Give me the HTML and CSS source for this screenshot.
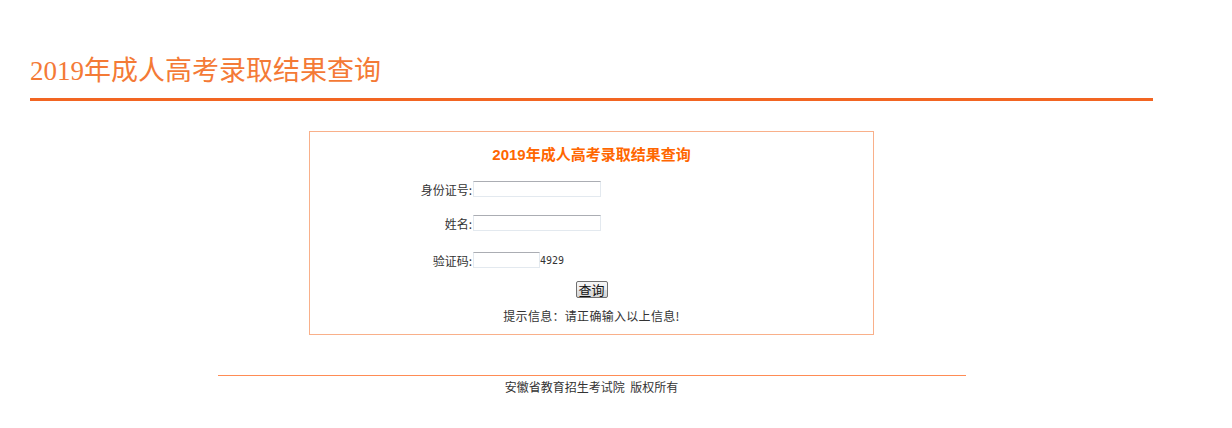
FILE: index.html
```html
<!DOCTYPE html>
<html lang="zh-CN">
<head>
<meta charset="utf-8">
<title>2019年成人高考录取结果查询</title>
<link rel="stylesheet" href="styles.css">
</head>
<body>
<div class="page">
  <h1 class="page-title">2019年成人高考录取结果查询</h1>
  <div class="query-box">
    <div class="box-title">2019年成人高考录取结果查询</div>
    <div class="form-row row1">
      <label class="lbl">身份证号:</label>
      <input class="txt txt-long" type="text">
    </div>
    <div class="form-row row2">
      <label class="lbl">姓名:</label>
      <input class="txt txt-long" type="text">
    </div>
    <div class="form-row row3">
      <label class="lbl">验证码:</label>
      <input class="txt txt-short" type="text"><span class="code">4929</span>
    </div>
    <div class="btn-row"><button class="btn" type="button">查询</button></div>
    <div class="hint">提示信息：请正确输入以上信息!</div>
  </div>
  <div class="footer">安徽省教育招生考试院&nbsp;&nbsp;版权所有</div>
</div>
</body>
</html>
```
FILE: styles.css
```css
html, body {
  margin: 0;
  padding: 0;
  background: #fff;
}
body {
  font-family: "Noto Sans CJK SC", "Liberation Sans", sans-serif;
  color: #333;
  font-size: 12px;
}
.page {
  margin-left: 30px;
  width: 1123px;
  padding-top: 53px;
}
.page-title {
  margin: 0;
  font-family: "Liberation Serif", "Noto Sans CJK SC", serif;
  font-weight: normal;
  font-size: 27px;
  line-height: 36px;
  height: 36px;
  color: #f47a36;
  padding-bottom: 9px;
  border-bottom: 3px solid #f26522;
}
.query-box {
  width: 563px;
  height: 202px;
  margin: 30px auto 0;
  border: 1px solid #f9b08a;
  box-sizing: content-box;
}
.box-title {
  margin-top: 13px;
  height: 20px;
  line-height: 20px;
  text-align: center;
  font-family: "Liberation Sans", "Noto Sans CJK SC", sans-serif;
  font-weight: bold;
  font-size: 15px;
  color: #ff6600;
}
.form-row {
  display: flex;
  align-items: center;
  height: 32px;
}
.row1 { margin-top: 8px; }
.row2 { margin-top: 2px; }
.row3 { margin-top: 5px; }
.lbl {
  width: 162px;
  text-align: right;
  font-size: 12px;
  color: #333;
}
.txt {
  box-sizing: border-box;
  height: 16px;
  margin: 0 0 0 1px;
  padding: 0 2px;
  border: 1px solid #e3e9ef;
  border-top-color: #abadb3;
  background: #fff;
  font-size: 12px;
  outline: none;
}
.txt-long { width: 128px; }
.txt-short { width: 67px; }
.code {
  font-family: "DejaVu Sans Mono", monospace;
  font-size: 10px;
  color: #333;
}
.btn-row {
  display: flex;
  justify-content: center;
  margin-top: 4px;
  height: 19px;
  align-items: center;
}
.btn {
  box-sizing: border-box;
  width: 32px;
  height: 17px;
  padding: 0;
  border: 1px solid #707070;
  border-radius: 2px;
  background: linear-gradient(#f6f6f6, #eeeeee 50%, #e2e2e2 51%, #d6d6d6);
  font-family: "Noto Sans CJK SC", sans-serif;
  font-size: 13px;
  line-height: 15px;
  color: #111;
}
.hint {
  margin-top: 7px;
  height: 20px;
  line-height: 20px;
  text-align: center;
  font-size: 12px;
  letter-spacing: 0.3px;
  color: #333;
}
.footer {
  width: 748px;
  margin: 40px auto 0;
  border-top: 1px solid #ff8c55;
  line-height: 22px;
  text-align: center;
  font-size: 12px;
  color: #333;
}
```
